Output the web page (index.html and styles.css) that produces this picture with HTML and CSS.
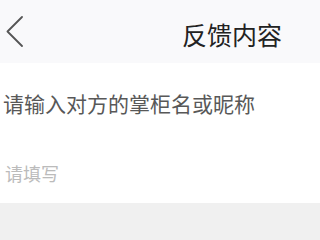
FILE: index.html
```html
<!DOCTYPE html>
<html lang="zh-CN">
<head>
<meta charset="utf-8">
<title>反馈内容</title>
<link rel="stylesheet" href="styles.css">
</head>
<body>
<header class="nav">
  <svg class="back" width="18" height="31" viewBox="0 0 18 31" aria-hidden="true">
    <polyline points="16,1 1.5,15.5 16,30" fill="none" stroke="#555" stroke-width="1.8" stroke-linecap="round" stroke-linejoin="round"/>
  </svg>
  <h1 class="title">反馈内容</h1>
</header>
<main class="form">
  <div class="label">请输入对方的掌柜名或昵称</div>
  <div class="field">请填写</div>
</main>
</body>
</html>
```

FILE: styles.css
```css
html, body {
  margin: 0;
  padding: 0;
  background: #f0f0f0;
  font-family: "Noto Sans CJK SC", "Noto Sans", sans-serif;
}
.nav {
  display: flex;
  align-items: flex-start;
  height: 63px;
  box-sizing: border-box;
  background: #f9f9fb;
}
.back {
  display: block;
  margin: 16px 0 0 6px;
  flex: none;
}
.title {
  margin: 22px 0 0 158px;
  font-size: 25px;
  line-height: 25px;
  font-weight: 400;
  color: #222;
  white-space: nowrap;
}
.form {
  background: #fff;
  padding: 30px 0 0 0;
  height: 140px;
  box-sizing: border-box;
}
.label {
  padding-left: 3px;
  font-size: 21px;
  line-height: 21px;
  color: #585858;
  white-space: nowrap;
}
.field {
  margin-top: 50px;
  padding-left: 5px;
  font-size: 18px;
  line-height: 18px;
  color: #bbb;
}
```
